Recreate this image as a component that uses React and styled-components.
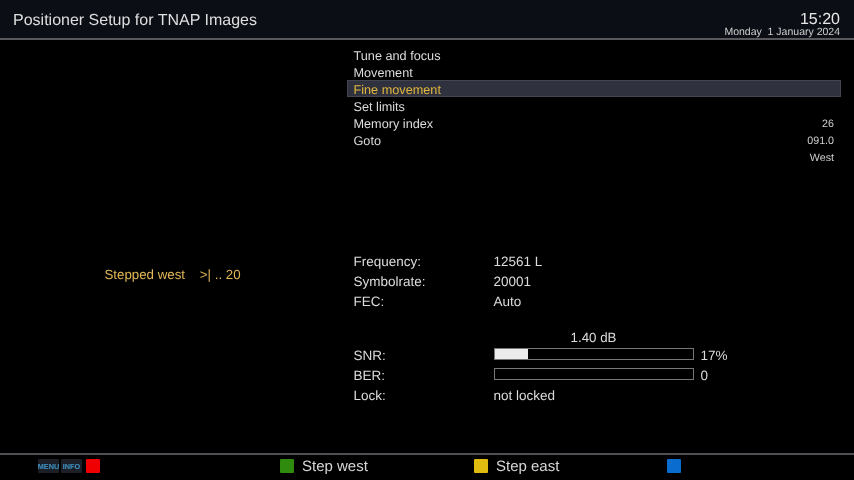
import React from "react";
import styled, { createGlobalStyle } from "styled-components";

const GlobalStyle = createGlobalStyle`
  html, body {
    margin: 0;
    padding: 0;
    background: #000;
  }
  body {
    font-family: "Liberation Sans", Arial, sans-serif;
    color: #dcdcdc;
    text-rendering: geometricPrecision;
  }
`;

// the slight blur gives the soft grey text of the receiver's scaled screen grab
const Screen = styled.div`
  width: 854px;
  height: 480px;
  display: flex;
  flex-direction: column;
  overflow: hidden;
  background: #000;
  filter: blur(0.3px);
`;

const Header = styled.header`
  height: 38px;
  flex: none;
  display: flex;
  justify-content: space-between;
  padding: 0 14px 0 13px;
  background: #0b0e15;
  border-bottom: 2px solid #5a5a5e;
`;

const Title = styled.h1`
  margin: 11px 0 0;
  font-size: 16px;
  line-height: 20px;
  font-weight: normal;
  color: #dedede;
`;

const Clock = styled.div`
  display: flex;
  flex-direction: column;
  align-items: flex-end;
  padding-top: 13px;
`;

const Time = styled.span`
  font-size: 16px;
  line-height: 14px;
  color: #e6e6e6;
`;

const DateLine = styled.span`
  font-size: 10.5px;
  line-height: 10px;
  color: #cfcfcf;
  white-space: pre;
`;

const Main = styled.main`
  flex: 1;
  display: flex;
  min-height: 0;
`;

const StatusPane = styled.div`
  width: 347px;
  flex: none;
  display: flex;
  justify-content: center;
  padding: 226px 2px 0 0;
  box-sizing: border-box;
`;

const StatusText = styled.span`
  font-size: 13.3px;
  line-height: 17px;
  height: 17px;
  color: #e2b855;
  white-space: pre;
`;

const Content = styled.div`
  width: 494px;
  flex: none;
  padding-top: 6px;
`;

const Menu = styled.ul`
  list-style: none;
  margin: 0;
  padding: 0;
`;

const MenuItem = styled.li`
  height: 17px;
  box-sizing: border-box;
  display: flex;
  justify-content: space-between;
  align-items: center;
  font-size: 12.7px;
  color: ${(p) => (p.$active ? "#e2b63c" : "#dcdcdc")};
  background: ${(p) => (p.$active ? "#2f323e" : "transparent")};
  border: ${(p) => (p.$active ? "1px solid #44464f" : "none")};
  padding: ${(p) => (p.$active ? "2px 6px 0 5.5px" : "2px 7px 0 6.5px")};
`;

const Value = styled.span`
  font-size: 10.7px;
  color: #cfcfcf;
`;

const TuneInfo = styled.div`
  margin-top: 86px;
  padding-left: 6.5px;
`;

const InfoRow = styled.div`
  height: 20px;
  display: flex;
  align-items: center;
  font-size: 13.5px;
  color: #dcdcdc;
`;

const Label = styled.span`
  width: 140px;
  flex: none;
`;

const Gap = styled.div`
  height: 19px;
`;

const DbLine = styled.div`
  height: 15px;
  padding-left: 140px;
`;

const DbText = styled.div`
  width: 200px;
  text-align: center;
  font-size: 13.3px;
  line-height: 15px;
  color: #dcdcdc;
`;

const Bar = styled.div`
  width: 200px;
  height: 12px;
  box-sizing: border-box;
  border: 1px solid #77777a;
  flex: none;
  margin: 0 7px 2px 0;
  background: #000;
`;

const BarFill = styled.div`
  height: 100%;
  background: #ececec;
`;

const Footer = styled.footer`
  height: 21px;
  flex: none;
  display: flex;
  align-items: flex-start;
  padding: 4px 0 0 38px;
  border-top: 2px solid #505054;
`;

const KeySlot = styled.div`
  width: ${(p) => p.$w}px;
  flex: none;
  display: flex;
  align-items: center;
  height: 14px;
`;

const MiniKey = styled.span`
  width: 21px;
  height: 14px;
  margin-right: 2px;
  background: #1c2026;
  border-radius: 1px;
  display: flex;
  align-items: center;
  justify-content: center;
  font-size: 7.3px;
  font-weight: bold;
  color: #3f94c8;
`;

const ColorKey = styled.span`
  width: 14px;
  height: 14px;
  flex: none;
  margin-left: ${(p) => p.$ml || 0}px;
  border-radius: 1px;
  background: ${(p) => p.$color};
`;

const KeyLabel = styled.span`
  margin-left: 8px;
  font-size: 15px;
  color: #d6d6d6;
`;

export default function App() {
  const menu = [
    ["Tune and focus"],
    ["Movement"],
    ["Fine movement", null, true],
    ["Set limits"],
    ["Memory index", "26"],
    ["Goto", "091.0"],
    ["", "West"],
  ];

  return (
    <Screen>
      <GlobalStyle />
      <Header>
        <Title>Positioner Setup for TNAP Images</Title>
        <Clock>
          <Time>15:20</Time>
          <DateLine>Monday  1 January 2024</DateLine>
        </Clock>
      </Header>
      <Main>
        <StatusPane>
          <StatusText>{"Stepped west    >| .. 20"}</StatusText>
        </StatusPane>
        <Content>
          <Menu>
            {menu.map(([name, value, active], i) => (
              <MenuItem key={i} $active={active}>
                <span>{name}</span>
                {value && <Value>{value}</Value>}
              </MenuItem>
            ))}
          </Menu>
          <TuneInfo>
            <InfoRow><Label>Frequency:</Label>12561 L</InfoRow>
            <InfoRow><Label>Symbolrate:</Label>20001</InfoRow>
            <InfoRow><Label>FEC:</Label>Auto</InfoRow>
            <Gap />
            <DbLine><DbText>1.40 dB</DbText></DbLine>
            <InfoRow>
              <Label>SNR:</Label>
              <Bar><BarFill style={{ width: "17%" }} /></Bar>
              17%
            </InfoRow>
            <InfoRow>
              <Label>BER:</Label>
              <Bar><BarFill style={{ width: "0%" }} /></Bar>
              0
            </InfoRow>
            <InfoRow><Label>Lock:</Label>not locked</InfoRow>
          </TuneInfo>
        </Content>
      </Main>
      <Footer>
        <KeySlot $w={242}>
          <MiniKey>MENU</MiniKey>
          <MiniKey>INFO</MiniKey>
          <ColorKey $color="#f00000" $ml={2} />
        </KeySlot>
        <KeySlot $w={194}>
          <ColorKey $color="#2e8b0e" />
          <KeyLabel>Step west</KeyLabel>
        </KeySlot>
        <KeySlot $w={193}>
          <ColorKey $color="#e0bc10" />
          <KeyLabel>Step east</KeyLabel>
        </KeySlot>
        <KeySlot $w={20}>
          <ColorKey $color="#0b6cd0" />
        </KeySlot>
      </Footer>
    </Screen>
  );
}
